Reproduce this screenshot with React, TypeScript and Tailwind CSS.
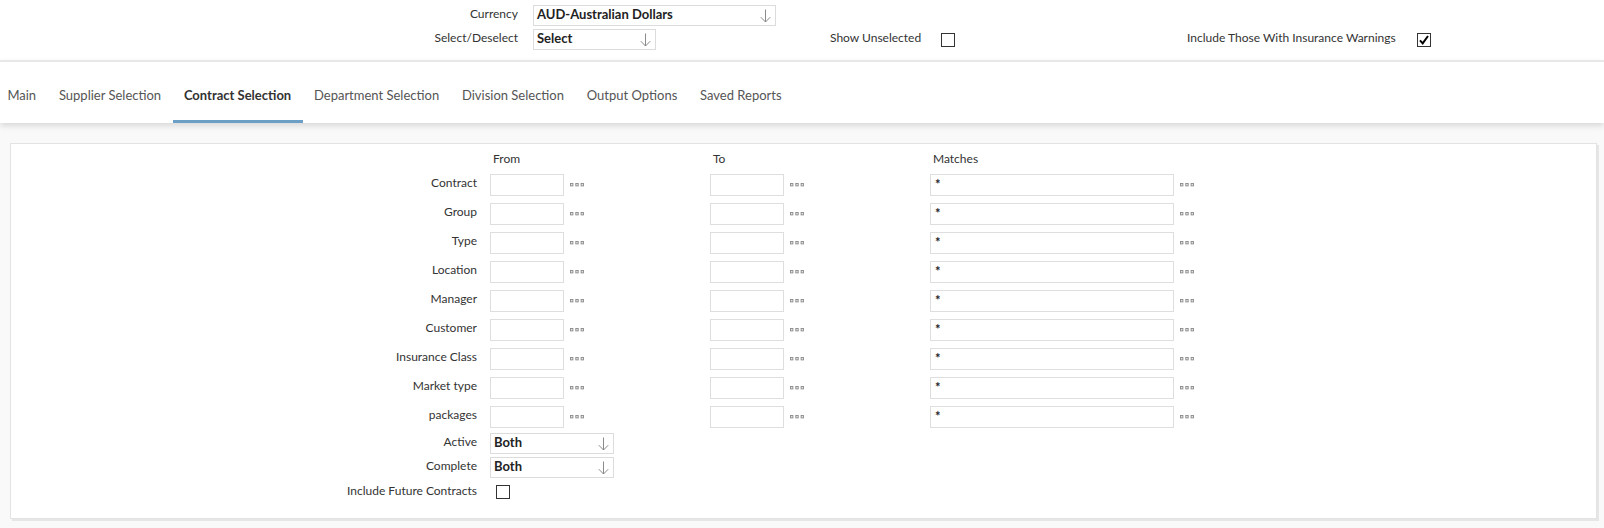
import React from "react";

const font = { fontFamily: "Lato, 'Open Sans', 'Liberation Sans', sans-serif" };

function Arrow() {
  return (
    <svg width="11" height="14" viewBox="0 0 11 14" className="shrink-0">
      <path d="M5.5 0.5 V13 M0.8 8.2 L5.5 13 L10.2 8.2" fill="none" stroke="#8a8a8a" strokeWidth="1" />
    </svg>
  );
}

function Dots() {
  return (
    <svg width="14" height="4" viewBox="0 0 14 4" className="shrink-0">
      <rect x="0.5" y="0.5" width="2.4" height="2.4" fill="#e4e4e4" stroke="#8a8a8a" strokeWidth="0.9" />
      <rect x="5.8" y="0.5" width="2.4" height="2.4" fill="#e4e4e4" stroke="#8a8a8a" strokeWidth="0.9" />
      <rect x="11.1" y="0.5" width="2.4" height="2.4" fill="#e4e4e4" stroke="#8a8a8a" strokeWidth="0.9" />
    </svg>
  );
}

function Select({ value, w, h }: { value: string; w: string; h: string }) {
  return (
    <div className={`flex items-start justify-between border border-[#dcdcdc] bg-white pl-[3px] pr-[4px] ${w} ${h}`}>
      <span className="text-[13px] font-bold leading-[16px] text-[#222]">{value}</span>
      <div className="self-end pb-[2px]">
        <Arrow />
      </div>
    </div>
  );
}

function Checkbox({ checked }: { checked?: boolean }) {
  return (
    <div className="relative h-[14px] w-[14px] shrink-0 border border-[#333] bg-white">
      {checked && (
        <svg width="12" height="12" viewBox="0 0 12 12" className="absolute left-0 top-0">
          <path d="M2 6.4 L4.7 9.4 L10 2" fill="none" stroke="#000" strokeWidth="2" strokeLinejoin="miter" />
        </svg>
      )}
    </div>
  );
}

function TextInput({ w, value }: { w: string; value?: string }) {
  return (
    <div className={`h-[22px] shrink-0 border border-[#dedede] bg-white pl-[4px] pt-[2px] ${w}`}>
      {value && <span className="block text-[13px] font-bold leading-[14px] text-[#222]">{value}</span>}
    </div>
  );
}

const rows = [
  "Contract",
  "Group",
  "Type",
  "Location",
  "Manager",
  "Customer",
  "Insurance Class",
  "Market type",
  "packages",
];

const tabs = [
  "Main",
  "Supplier Selection",
  "Contract Selection",
  "Department Selection",
  "Division Selection",
  "Output Options",
  "Saved Reports",
];

export default function App() {
  return (
    <div style={font} className="h-[528px] w-[1604px] overflow-hidden bg-[#f9f9f9] text-[12px] text-[#333]">
      {/* top filter area */}
      <div className="h-[60px] bg-white pt-[5px]">
        <div className="flex h-[21px] items-start">
          <div className="w-[518px] text-right leading-[18px]">Currency</div>
          <div className="ml-[15px]">
            <Select value="AUD-Australian Dollars" w="w-[243px]" h="h-[21px]" />
          </div>
        </div>
        <div className="mt-[3px] flex h-[21px] items-start">
          <div className="w-[518px] text-right leading-[18px]">Select/Deselect</div>
          <div className="ml-[15px]">
            <Select value="Select" w="w-[123px]" h="h-[21px]" />
          </div>
          <div className="ml-[174px] mt-[1px] w-[111px] leading-[16px]">Show Unselected</div>
          <div className="mt-[4px]">
            <Checkbox />
          </div>
          <div className="ml-[232px] mt-[1px] w-[230px] leading-[16px]">Include Those With Insurance Warnings</div>
          <div className="mt-[4px]">
            <Checkbox checked />
          </div>
        </div>
      </div>

      {/* tabs */}
      <div className="relative h-[63px] border-t-2 border-[#e8e8e8] bg-white shadow-[0_3px_6px_rgba(0,0,0,0.13)]">
        <div className="-ml-[4px] flex h-[61px] text-[13px]">
          {tabs.map((t) => {
            const active = t === "Contract Selection";
            return (
              <div
                key={t}
                className={`flex items-center px-[11.4px] pt-[9px] border-b-[3px] ${
                  active ? "border-[#6b9fc5] font-bold text-[#333]" : "border-transparent text-[#555]"
                }`}
              >
                {t}
              </div>
            );
          })}
        </div>
      </div>

      {/* panel */}
      <div className="ml-[10px] mt-[20px] h-[376px] w-[1587px] border border-[#e3e3e3] bg-white shadow-[2px_2px_0_#e6e6e6]">
        <div className="flex h-[30px] items-center">
          <div className="w-[482px]" />
          <div className="w-[220px]">From</div>
          <div className="w-[220px]">To</div>
          <div>Matches</div>
        </div>
        {rows.map((r) => (
          <div key={r} className="mb-[7px] flex h-[22px] items-start">
            <div className="w-[466px] text-right leading-[18px]">{r}</div>
            <div className="ml-[13px] flex items-center">
              <TextInput w="w-[74px]" />
              <div className="ml-[6px] mt-[-1px]">
                <Dots />
              </div>
            </div>
            <div className="ml-[126px] flex items-center">
              <TextInput w="w-[74px]" />
              <div className="ml-[6px] mt-[-1px]">
                <Dots />
              </div>
            </div>
            <div className="ml-[126px] flex items-center">
              <TextInput w="w-[244px]" value="*" />
              <div className="ml-[6px] mt-[-1px]">
                <Dots />
              </div>
            </div>
          </div>
        ))}
        <div className="-mt-[2px] flex h-[21px] items-start">
          <div className="w-[466px] text-right leading-[18px]">Active</div>
          <div className="ml-[13px]">
            <Select value="Both" w="w-[124px]" h="h-[21px]" />
          </div>
        </div>
        <div className="mt-[3px] flex h-[21px] items-start">
          <div className="w-[466px] text-right leading-[18px]">Complete</div>
          <div className="ml-[13px]">
            <Select value="Both" w="w-[124px]" h="h-[21px]" />
          </div>
        </div>
        <div className="mt-[4px] flex items-start">
          <div className="w-[466px] text-right leading-[18px]">Include Future Contracts</div>
          <div className="ml-[19px] mt-[3px]">
            <Checkbox />
          </div>
        </div>
      </div>
    </div>
  );
}
